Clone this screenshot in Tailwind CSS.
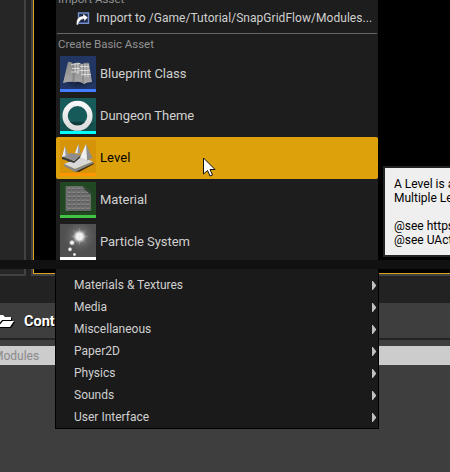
<!DOCTYPE html>
<html lang="en">
<head>
<meta charset="utf-8">
<title>Content Browser</title>
<script src="https://cdn.jsdelivr.net/npm/@tailwindcss/browser@4"></script>
</head>
<body class="relative h-[472px] w-[450px] overflow-hidden bg-[#3e3e3e] font-['Roboto',sans-serif] text-[12px] text-[#d0d0d0]">
<!-- Editor behind the menu -->
<main class="flex h-full flex-col">
  <section class="flex h-[303px] bg-[#222] pb-[27px]">
    <div class="h-full w-[26px] rounded-br-[2px] border-r-2 border-b-2 border-[#424242] bg-[#262626]"></div>
    <div class="ml-[5px] h-full flex-1 border-b-2 border-l-2 border-[#424242]">
      <div class="h-full border-b border-l border-[#dca11c] bg-black"></div>
    </div>
  </section>
  <header class="flex h-[35px] items-center bg-[#3e3e3e]">
    <svg class="-ml-[5px] h-4 w-[19px] drop-shadow-[1px_1px_0_#000]" viewBox="0 0 19 16"><path fill="#fff" d="M1 2h7l2 2h6v3H7L3 12H1zM8 8h11l-4 6H3z"/></svg>
    <span class="mt-[2px] ml-[10px] text-[14.5px] font-bold text-white [text-shadow:1px_1px_1px_#000]">Content</span>
  </header>
  <div class="h-[2px] bg-[#242424]"></div>
  <div class="mt-[6px] flex h-[19px] items-center bg-[#ccc] text-[#8b8b8b]"><span class="-ml-[7px]">Modules</span></div>
</main>

<!-- Asset menu -->
<div class="absolute top-0 left-[56px] h-[260px] w-[322px] overflow-hidden bg-[#1d1d1d]">
  <div class="h-[9px] pl-[2px] text-[11.5px] leading-[14px] text-[#929292]"><div class="-translate-y-[8px]">Import Asset</div></div>
  <div class="flex h-[18px] items-center pl-[20px]">
    <svg class="h-[15px] w-[14px]" viewBox="0 0 14 15"><path fill="#1c2b50" stroke="#7590cc" stroke-width="1.4" d="M2.500 2h10v10.300h-10z"/><path fill="#fff" stroke="#111" stroke-width=".4" d="M7 2.500l5 4-4 4V8C5 8 3 10 2 14H.5C0 9 2 5 7 5z"/></svg>
    <span class="ml-[6px] tracking-[0.045px] whitespace-nowrap">Import to /Game/Tutorial/SnapGridFlow/Modules...</span>
  </div>
  <div class="mt-[6px] mr-[1px] ml-[1px] h-px bg-[#666]"></div>
  <div class="h-[19px] pl-[2px] text-[11.5px] leading-[20px] tracking-[-0.04px] text-[#929292]">Create Basic Asset</div>
  <ul class="text-[13px] leading-[36px] tracking-[-0.04px]">
    <li class="flex h-[42px] px-1 py-[3px]">
      <svg class="h-9 w-9" viewBox="0 0 36 36">
        <defs><radialGradient id="bp"><stop stop-color="#10192f"/><stop offset="1" stop-color="#213663"/></radialGradient><linearGradient id="map" x2="0" y2="1"><stop stop-color="#8b8b8b"/><stop offset="1" stop-color="#a8a8a8"/></linearGradient></defs>
        <path fill="#213663" d="M0 0h36v36H0z"/><ellipse cx="19" cy="24" rx="17" ry="9" fill="url(#bp)"/>
        <path fill="url(#map)" d="M8 6q3-1 5 2 5-3 9 0 4-2 7-1l3 19q-5 0-8 2-4-3-9-2-5-1-12 1z"/><path fill="#666" opacity=".35" d="M13 8l-1 18 3 1V8zM22 8v18l2 2V8z"/>
        <path fill="none" stroke="#e4e4e4" stroke-width=".8" d="M11 8.500l9-1M12 12.500h8M11 16h8M15 7v9M18 7v11M22 8v12M25 8v13M28 8v13M20 10.500h9M19 14.500h11M22 18.500h9"/>
        <path fill="#427cff" d="M0 33h36v3H0z"/>
      </svg><span class="ml-1">Blueprint Class</span>
    </li>
    <li class="flex h-[42px] px-1 py-[3px]">
      <svg class="h-9 w-9" viewBox="0 0 36 36">
        <defs><linearGradient id="ring" x2="0" y2="1"><stop stop-color="#f8f8f8"/><stop offset="1" stop-color="#dcdcdc"/></linearGradient></defs>
        <path fill="#15514e" d="M0 0h36v36H0z"/><path fill="#176361" d="M0 0h36v24H0z" opacity=".6"/><ellipse cx="18" cy="26.500" rx="14" ry="2.800" fill="#0e3d3b"/>
        <circle cx="17.500" cy="17.800" r="12.400" fill="none" stroke="url(#ring)" stroke-width="5.300"/><path fill="#00ffff" d="M0 33h36v3H0z"/>
      </svg><span class="ml-1">Dungeon Theme</span>
    </li>
    <li class="flex h-[42px] rounded-[2px] bg-[#dda20b] px-1 py-[3px] tracking-[0.1px] text-black">
      <svg class="h-9 w-9" viewBox="0 0 36 36">
        <path fill="#d69409" d="M0 0h36v36H0z"/><path fill="#3d2a08" d="M13 31l20-8.500 1 1.500-15 8zM3 17l11 4-4 2z"/>
        <path fill="#d8d8d8" d="M4 24l17-7 12 4.500-18 7.500z"/><path fill="#888" d="M4 24l11 5v3L4 26zM15 29l18-7.500v2L15 32z"/>
        <path fill="#3a3a3a" d="M2 16.500l12 4.500 7-6v2l-7 6-12-4z"/><path fill="#8d8d8d" d="M2 16.500l9-3.500 10 2-7 6z"/>
        <path fill="#999" d="M5 6l3.500 9L2 17zM18.500 4l2.500 10-6-1z"/><path fill="#ececec" d="M5 6l.5 10L2 17zM18.500 4l-1 9.500-2.500-.5z"/>
        <path fill="#8e8e8e" d="M26 4l6.500 14-5.500 2.500-7-3z"/><path fill="#efefef" d="M26 4l1 16.500-7-3z"/><path fill="#ff9500" d="M0 33h36v3H0z"/>
      </svg><span class="ml-1">Level</span>
    </li>
    <li class="flex h-[42px] px-1 py-[3px]">
      <svg class="h-9 w-9" viewBox="0 0 36 36">
        <defs><pattern id="dots" width="4.600" height="4" patternUnits="userSpaceOnUse" x="7" y="5"><path fill="#717171" d="M0 0h5v4H0z"/><path fill="#565656" d="M1 2h3v1.400H1z"/><path fill="#8e8e8e" d="M1.300 .9h2.200v1.200H1.300z"/></pattern></defs>
        <path fill="#224823" d="M0 0h36v36H0z"/><path fill="#173518" d="M9 28h22v2H9z"/><path fill="url(#dots)" stroke="#777" stroke-width=".7" d="M6 4.500h17q6 3 7.500 8v16H6z"/><path fill="#344438" d="M22 4.500q8 1 8.500 8-5-4-8.500-8z"/><path fill="#43c344" d="M0 33h36v3H0z"/>
      </svg><span class="ml-1">Material</span>
    </li>
    <li class="flex h-[42px] px-1 py-[3px]">
      <svg class="h-9 w-9" viewBox="0 0 36 36">
        <defs><radialGradient id="glow"><stop stop-color="#fff"/><stop offset=".45" stop-color="#fff" stop-opacity=".9"/><stop offset="1" stop-color="#aaa" stop-opacity="0"/></radialGradient></defs>
        <path fill="#505050" d="M0 0h36v36H0z"/><circle cx="19.500" cy="12.500" r="16" fill="url(#glow)" opacity=".16"/><circle cx="19.500" cy="12.500" r="7.500" fill="url(#glow)"/>
        <path stroke="#ccc" stroke-width=".5" opacity=".5" d="M19.500 4v17M11 12.500h17M13 6l13 13M26 6L13 19"/><circle cx="12" cy="18.700" r="3.200" fill="url(#glow)"/><circle cx="10" cy="25.300" r="2.600" fill="url(#glow)"/><circle cx="14.500" cy="30.500" r="2" fill="url(#glow)"/><path fill="#fff" d="M0 33h36v3H0z"/>
      </svg><span class="ml-1">Particle System</span>
    </li>
  </ul>
</div>

<div class="absolute top-[166px] left-[383px] h-[91px] w-[67px] overflow-hidden border-2 border-r-0 border-[#222] bg-[#efefef] pt-[9px] pl-[9px] leading-[14px] whitespace-pre text-black">A Level is a collection of assets
Multiple Levels can be placed

@see https://docs
@see UActor</div>

<div class="absolute top-[260px] left-0 h-[9px] w-full bg-[#111]"></div>
<ul class="absolute top-[269px] left-[55px] h-[160px] w-[324px] border border-t-0 border-black bg-[#1a1a1a] pt-[5px] leading-[22px]">
  <li class="flex h-[22px] items-center justify-between pr-[2px] pl-[18px]">Materials &amp; Textures<svg class="h-[9px] w-1" viewBox="0 0 4 9"><path fill="#c0c0c0" d="M0 0h.8L4 4v1L.8 9H0z"/></svg></li>
  <li class="flex h-[22px] items-center justify-between pr-[2px] pl-[18px]">Media<svg class="h-[9px] w-1" viewBox="0 0 4 9"><path fill="#c0c0c0" d="M0 0h.8L4 4v1L.8 9H0z"/></svg></li>
  <li class="flex h-[22px] items-center justify-between pr-[2px] pl-[18px]">Miscellaneous<svg class="h-[9px] w-1" viewBox="0 0 4 9"><path fill="#c0c0c0" d="M0 0h.8L4 4v1L.8 9H0z"/></svg></li>
  <li class="flex h-[22px] items-center justify-between pr-[2px] pl-[18px]">Paper2D<svg class="h-[9px] w-1" viewBox="0 0 4 9"><path fill="#c0c0c0" d="M0 0h.8L4 4v1L.8 9H0z"/></svg></li>
  <li class="flex h-[22px] items-center justify-between pr-[2px] pl-[18px]">Physics<svg class="h-[9px] w-1" viewBox="0 0 4 9"><path fill="#c0c0c0" d="M0 0h.8L4 4v1L.8 9H0z"/></svg></li>
  <li class="flex h-[22px] items-center justify-between pr-[2px] pl-[18px]">Sounds<svg class="h-[9px] w-1" viewBox="0 0 4 9"><path fill="#c0c0c0" d="M0 0h.8L4 4v1L.8 9H0z"/></svg></li>
  <li class="flex h-[22px] items-center justify-between pr-[2px] pl-[18px]">User Interface<svg class="h-[9px] w-1" viewBox="0 0 4 9"><path fill="#c0c0c0" d="M0 0h.8L4 4v1L.8 9H0z"/></svg></li>
</ul>
<svg class="absolute top-[157px] left-[202px] h-5 w-[14px]" viewBox="0 0 14 20"><path fill="#fff" stroke="#111" d="M1.500 1v16l4-3.500 2.500 5.500 2.500-1-2.500-5.500h5z"/></svg>
</body>
</html>
